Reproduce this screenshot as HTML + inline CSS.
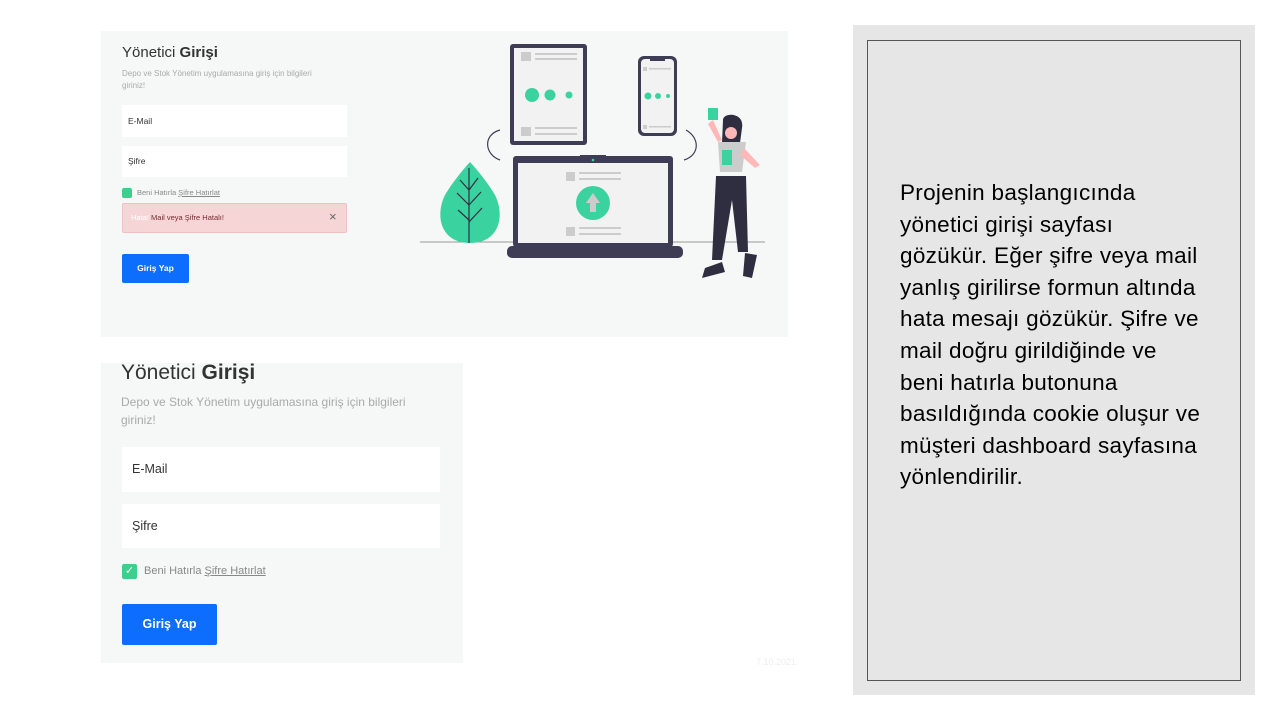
<!DOCTYPE html>
<html><head><meta charset="utf-8"><style>
body{margin:0;width:1280px;height:720px;background:#fff;position:relative;overflow:hidden;font-family:"Liberation Sans",sans-serif}
.a{position:absolute}
.inp{position:absolute;background:#fff;color:#333}
</style></head><body>
<div class="a" style="left:101px;top:31px;width:687px;height:306px;background:#f5f8f7"></div>
<div class="a" style="left:122px;top:44px;font-size:15px;color:#333">Yönetici <b>Girişi</b></div>
<div class="a" style="left:122px;top:68px;width:215px;font-size:8px;line-height:12px;color:#aaa">Depo ve Stok Yönetim uygulamasına giriş için bilgileri giriniz!</div>
<div class="inp" style="left:122px;top:105px;width:225px;height:32px;font-size:8.5px;line-height:32px;padding-left:6px;box-sizing:border-box">E-Mail</div>
<div class="inp" style="left:122px;top:146px;width:225px;height:31px;font-size:8.5px;line-height:31px;padding-left:6px;box-sizing:border-box">Şifre</div>
<div class="a" style="left:122px;top:188px;width:10px;height:10px;background:#3ccf8e;border-radius:2px"></div>
<div class="a" style="left:137px;top:188px;font-size:7.5px;color:#888">Beni Hatırla <u>Şifre Hatırlat</u></div>
<div class="a" style="left:122px;top:203px;width:225px;height:30px;background:#f5d5d6;border:1px solid #edc0c2;box-sizing:border-box;border-radius:2px"></div>
<div class="a" style="left:131px;top:213px;font-size:7.5px;color:#7a2b30"><span style="color:#fff">Hata!</span> Mail veya Şifre Hatalı!</div>
<div class="a" style="left:329px;top:209px;font-size:13px;color:#666">×</div>
<div class="a" style="left:122px;top:254px;width:67px;height:29px;background:#0d6efd;border-radius:2px;color:#fff;font-size:8.5px;line-height:29px;text-align:center;font-weight:bold">Giriş Yap</div>
<svg class="a" style="left:0;top:0" width="800" height="300" viewBox="0 0 800 300">
<line x1="420" y1="242" x2="765" y2="242" stroke="#999" stroke-width="1"/>
<path d="M470 243 C440 243 435 215 445 195 C455 178 470 162 470 162 C470 162 485 178 495 195 C505 215 500 243 470 243Z" fill="#3ad29f"/>
<path d="M469 168 V243 M469 190 L460 180 M469 190 L478 178 M469 205 L457 193 M469 205 L481 192 M469 220 L458 210 M469 222 L482 208" stroke="#2f2e41" stroke-width="1.2" fill="none"/>
<rect x="510" y="44" width="77" height="101" rx="3" fill="#3f3d56"/>
<rect x="514" y="48" width="69" height="93" fill="#f2f2f2"/>
<rect x="521" y="52" width="10" height="9" fill="#ccc"/><rect x="535" y="53" width="42" height="2" fill="#ccc"/><rect x="535" y="58" width="42" height="2" fill="#ccc"/>
<rect x="521" y="127" width="10" height="9" fill="#ccc"/><rect x="535" y="127" width="42" height="2" fill="#ccc"/><rect x="535" y="133" width="42" height="2" fill="#ccc"/>
<circle cx="532" cy="95" r="7" fill="#3ad29f"/><circle cx="550" cy="95" r="5.5" fill="#3ad29f"/><circle cx="569" cy="95" r="3.5" fill="#3ad29f"/>
<rect x="638" y="56" width="39" height="80" rx="6" fill="#3f3d56"/>
<rect x="641" y="59" width="33" height="74" rx="4" fill="#f2f2f2"/>
<rect x="650" y="58" width="15" height="3" fill="#3f3d56"/>
<circle cx="648" cy="96" r="3.5" fill="#3ad29f"/><circle cx="658" cy="96" r="3" fill="#3ad29f"/><circle cx="668" cy="96" r="2" fill="#3ad29f"/>
<rect x="643" y="67" width="4" height="4" fill="#ccc"/><rect x="649" y="68" width="22" height="1.5" fill="#ccc"/>
<rect x="643" y="125" width="4" height="4" fill="#ccc"/><rect x="649" y="126" width="22" height="1.5" fill="#ccc"/>
<path d="M500 160 C485 155 482 135 500 130" stroke="#3f3d56" fill="none" stroke-width="1.2"/>
<path d="M684 160 C700 155 700 138 686 130" stroke="#3f3d56" fill="none" stroke-width="1.2"/>
<rect x="513" y="156" width="160" height="91" rx="3" fill="#3f3d56"/>
<rect x="518" y="163" width="150" height="80" fill="#f2f2f2"/>
<rect x="580" y="155" width="26" height="5" fill="#3f3d56"/>
<circle cx="593" cy="160" r="1.3" fill="#3ad29f"/>
<rect x="566" y="172" width="9" height="9" fill="#ccc"/><rect x="579" y="172" width="42" height="2" fill="#ccc"/><rect x="579" y="178" width="42" height="2" fill="#ccc"/>
<rect x="566" y="227" width="9" height="9" fill="#ccc"/><rect x="579" y="227" width="42" height="2" fill="#ccc"/><rect x="579" y="233" width="42" height="2" fill="#ccc"/>
<circle cx="593" cy="203" r="17" fill="#3ad29f"/>
<path d="M593 193 L600 203 H596 V212 H590 V203 H586Z" fill="#ccc"/>
<rect x="507" y="246" width="176" height="12" rx="5" fill="#3f3d56"/>
<rect x="708" y="108" width="10" height="12" fill="#3ad29f"/>
<path d="M723 120 C723 112 745 112 742 128 L740 143 L722 143Z" fill="#2f2e41"/>
<circle cx="731" cy="133" r="6" fill="#ffb8b8"/>
<path d="M718 142 H746 L742 172 H720Z" fill="#ccc"/>
<rect x="722" y="150" width="10" height="15" fill="#3ad29f"/>
<path d="M716 176 L746 176 L748 252 L738 252 L732 200 L722 260 L712 260Z" fill="#2f2e41"/>
<path d="M705 268 L722 262 L725 272 L702 278Z M745 253 L757 255 L752 278 L743 276Z" fill="#2f2e41"/>
<path d="M744 148 L760 165 L755 168 L740 155Z M713 120 L722 140 L718 142 L708 124Z" fill="#ffb8b8"/>
</svg>
<div class="a" style="left:101px;top:363px;width:362px;height:300px;background:#f5f8f7"></div>
<div class="a" style="left:121px;top:361px;font-size:21px;color:#333">Yönetici <b>Girişi</b></div>
<div class="a" style="left:121px;top:393px;width:300px;font-size:12px;line-height:18px;color:#aaa">Depo ve Stok Yönetim uygulamasına giriş için bilgileri giriniz!</div>
<div class="inp" style="left:122px;top:447px;width:318px;height:45px;font-size:12.5px;line-height:45px;padding-left:10px;box-sizing:border-box">E-Mail</div>
<div class="inp" style="left:122px;top:504px;width:318px;height:44px;font-size:12.5px;line-height:44px;padding-left:10px;box-sizing:border-box">Şifre</div>
<div class="a" style="left:122px;top:564px;width:15px;height:15px;background:#3ccf8e;border-radius:2px;color:#fff;font-size:11px;line-height:15px;text-align:center">✓</div>
<div class="a" style="left:144px;top:565px;font-size:11px;color:#888">Beni Hatırla <u>Şifre Hatırlat</u></div>
<div class="a" style="left:122px;top:604px;width:95px;height:41px;background:#0d6efd;border-radius:2px;color:#fff;font-size:12.5px;line-height:41px;text-align:center;font-weight:bold">Giriş Yap</div>
<div class="a" style="left:756px;top:657px;font-size:9px;color:#eee">7.10.2021</div>
<div class="a" style="left:853px;top:25px;width:402px;height:670px;background:#e6e6e6"></div>
<div class="a" style="left:867px;top:40px;width:374px;height:641px;border:1px solid #555;box-sizing:border-box"></div>
<div class="a" style="left:900px;top:177px;white-space:nowrap;font-size:22.5px;letter-spacing:0.3px;line-height:31.6px;color:#000">Projenin başlangıcında<br>yönetici girişi sayfası<br>gözükür. Eğer şifre veya mail<br>yanlış girilirse formun altında<br>hata mesajı gözükür. Şifre ve<br>mail doğru girildiğinde ve<br>beni hatırla butonuna<br>basıldığında cookie oluşur ve<br>müşteri dashboard sayfasına<br>yönlendirilir.</div>
</body></html>
